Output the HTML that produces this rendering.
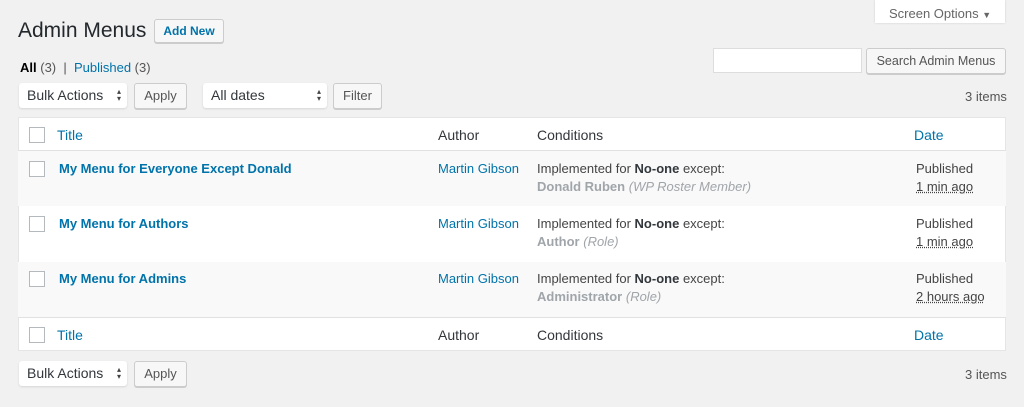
<!DOCTYPE html>
<html><head><meta charset="utf-8"><style>
*{box-sizing:border-box;margin:0;padding:0}
body{width:1024px;height:407px;background:#f1f1f1;font-family:"Liberation Sans",sans-serif;font-size:13px;color:#444;position:relative;overflow:hidden}
.a{position:absolute;white-space:nowrap}
.btn{position:absolute;border:1px solid #ccc;background:#f7f7f7;border-radius:3px;box-shadow:0 1px 0 #ccc;color:#555;font-size:13px;text-align:center}
.sel{position:absolute;background:#fff;border-radius:3px;box-shadow:0 1px 2px rgba(0,0,0,.12);color:#32373c;font-size:14px;padding-left:8px}
.sel:after{content:"\25B4\A\25BE";white-space:pre;position:absolute;right:6px;top:5px;font-size:8px;line-height:7px;color:#444}
.link{color:#0073aa}
.cb{position:absolute;left:29px;width:16px;height:16px;border:1px solid #b4b9be;background:#fff}
.row{position:absolute;left:18px;width:988px}
.t{font-size:13px;font-weight:bold;color:#0073aa}
.gray{color:#a0a5aa}
u{text-decoration:underline dotted}
</style></head><body>
<div class="a" style="left:875px;top:0;width:130px;height:23px;background:#fff;box-shadow:0 0 2px rgba(0,0,0,.15)"></div>
<div class="a" style="left:889px;top:6px;color:#666">Screen Options <span style="font-size:9px">▼</span></div>
<div class="a" style="left:18px;top:19px;font-size:21px;color:#23282d">Admin Menus</div>
<div class="btn" style="left:154px;top:19px;width:70px;height:24px;line-height:22px;color:#0073aa;font-weight:bold;font-size:12px;background:#f7f7f7">Add New</div>
<div class="a" style="left:20px;top:60px;color:#555"><b style="color:#000">All</b> (3) &nbsp;|&nbsp; <span class="link">Published</span> (3)</div>
<div class="a" style="left:713px;top:48px;width:149px;height:25px;background:#fff;border:1px solid #ddd"></div>
<div class="btn" style="left:866px;top:48px;width:140px;height:26px;line-height:24px;font-size:12.5px;color:#555">Search Admin Menus</div>
<div class="sel" style="left:19px;top:83px;width:108px;height:25px;line-height:25px">Bulk Actions</div>
<div class="btn" style="left:134px;top:83px;width:53px;height:26px;line-height:24px">Apply</div>
<div class="sel" style="left:203px;top:83px;width:124px;height:25px;line-height:25px">All dates</div>
<div class="btn" style="left:333px;top:83px;width:49px;height:26px;line-height:24px">Filter</div>
<div class="a" style="left:965px;top:89px;color:#555">3 items</div>

<div class="row" style="top:117px;height:234px;background:#fff;border:1px solid #e5e5e5"></div>
<div class="row" style="top:150px;height:1px;background:#e1e1e1"></div>
<div class="row" style="top:151px;height:55px;background:#f9f9f9"></div>
<div class="row" style="top:262px;height:55px;background:#f9f9f9"></div>
<div class="row" style="top:317px;height:1px;background:#e1e1e1"></div>

<div class="cb" style="top:127px"></div>
<div class="a link" style="left:57px;top:127px;font-size:14px">Title</div>
<div class="a" style="left:438px;top:127px;font-size:14px;color:#32373c">Author</div>
<div class="a" style="left:537px;top:127px;font-size:14px;color:#32373c">Conditions</div>
<div class="a link" style="left:914px;top:127px;font-size:14px">Date</div>

<div class="cb" style="top:161px"></div>
<div class="a t" style="left:59px;top:161px">My Menu for Everyone Except Donald</div>
<div class="a link" style="left:438px;top:161px">Martin Gibson</div>
<div class="a" style="left:537px;top:161px">Implemented for <b style="color:#32373c">No-one</b> except:</div>
<div class="a gray" style="left:537px;top:179px"><b>Donald Ruben</b> <i>(WP Roster Member)</i></div>
<div class="a" style="left:916px;top:161px">Published</div>
<div class="a" style="left:916px;top:179px"><u>1 min ago</u></div>

<div class="cb" style="top:216px"></div>
<div class="a t" style="left:59px;top:216px">My Menu for Authors</div>
<div class="a link" style="left:438px;top:216px">Martin Gibson</div>
<div class="a" style="left:537px;top:216px">Implemented for <b style="color:#32373c">No-one</b> except:</div>
<div class="a gray" style="left:537px;top:234px"><b>Author</b> <i>(Role)</i></div>
<div class="a" style="left:916px;top:216px">Published</div>
<div class="a" style="left:916px;top:234px"><u>1 min ago</u></div>

<div class="cb" style="top:271px"></div>
<div class="a t" style="left:59px;top:271px">My Menu for Admins</div>
<div class="a link" style="left:438px;top:271px">Martin Gibson</div>
<div class="a" style="left:537px;top:271px">Implemented for <b style="color:#32373c">No-one</b> except:</div>
<div class="a gray" style="left:537px;top:289px"><b>Administrator</b> <i>(Role)</i></div>
<div class="a" style="left:916px;top:271px">Published</div>
<div class="a" style="left:916px;top:289px"><u>2 hours ago</u></div>

<div class="cb" style="top:327px"></div>
<div class="a link" style="left:57px;top:327px;font-size:14px">Title</div>
<div class="a" style="left:438px;top:327px;font-size:14px;color:#32373c">Author</div>
<div class="a" style="left:537px;top:327px;font-size:14px;color:#32373c">Conditions</div>
<div class="a link" style="left:914px;top:327px;font-size:14px">Date</div>

<div class="sel" style="left:19px;top:361px;width:108px;height:25px;line-height:25px">Bulk Actions</div>
<div class="btn" style="left:134px;top:361px;width:53px;height:26px;line-height:24px">Apply</div>
<div class="a" style="left:965px;top:367px;color:#555">3 items</div>
</body></html>
